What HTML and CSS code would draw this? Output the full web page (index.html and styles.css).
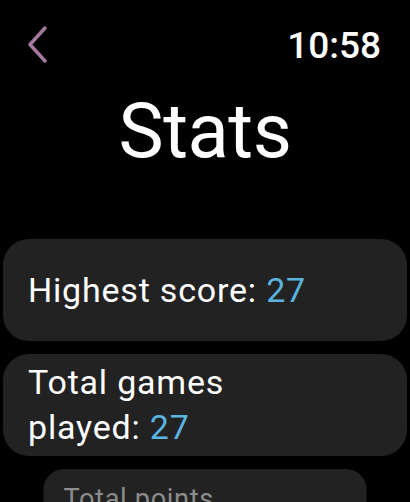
FILE: index.html
```html
<!DOCTYPE html>
<html lang="en">
<head>
  <meta charset="UTF-8">
  <meta name="viewport" content="width=device-width, initial-scale=1.0">
  <title>Stats</title>
  <link rel="stylesheet" href="styles.css">
</head>
<body>

<div class="watch">
  <div class="top-bar">
    <a class="back" href="#">
      <svg width="22" height="38" viewBox="0 0 22 38">
        <path d="M19 2 L4 18.5 L19 35" fill="none" stroke="#a57a9e" stroke-width="3.4" stroke-linecap="round" stroke-linejoin="round"/>
      </svg>
    </a>
    <span class="time">10:58</span>
  </div>

  <h1 class="title">Stats</h1>

  <div class="stat-list">
    <div class="stat-card">
      <p>Highest score: <span class="value">27</span></p>
    </div>
    <div class="stat-card">
      <p>Total games played: <span class="value">27</span></p>
    </div>
    <div class="stat-card faded">
      <p>Total points earned: <span class="value">412</span></p>
    </div>
  </div>
</div>

</body>
</html>
```

FILE: styles.css
```css
body {
  margin: 0;
  background-color: #000;
  color: #fff;
  font-family: 'Roboto', 'Noto Sans', sans-serif;
  overflow: hidden;
}
.watch {
  width: 410px;
  height: 502px;
  overflow: hidden;
}
.top-bar {
  display: flex;
  justify-content: space-between;
  align-items: flex-start;
  padding: 26px 29px 0 26px;
  height: 40px;
}
.back {
  display: block;
  line-height: 0;
}
.time {
  font-size: 37px;
  font-weight: 500;
  line-height: 40px;
}
.title {
  margin: 20px 0 0;
  text-align: center;
  font-size: 76px;
  font-weight: 400;
  line-height: 90px;
  letter-spacing: -0.5px;
}
.stat-list {
  display: flex;
  flex-direction: column;
  gap: 13px;
  margin-top: 63px;
  padding: 0 3px;
}
.stat-card {
  background-color: #222;
  border-radius: 26px;
  min-height: 102px;
  padding: 6px 25px;
  box-sizing: border-box;
  display: flex;
  align-items: center;
}
.stat-card p {
  margin: 0;
  max-width: 300px;
  font-size: 34px;
  line-height: 45px;
  letter-spacing: 0.8px;
}
.value {
  color: #5ab4e0;
}
.stat-card.faded {
  transform: scale(0.8);
  transform-origin: top center;
  padding-top: 15px;
  color: #8c8c8c;
  align-items: flex-start;
}
.stat-card.faded p {
  max-width: 240px;
}
.stat-card.faded .value {
  color: #4a86a6;
}
```
